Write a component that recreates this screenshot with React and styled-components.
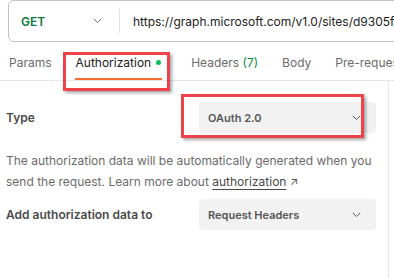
import styled, { createGlobalStyle } from "styled-components";

const GlobalStyle = createGlobalStyle`
  html, body {
    margin: 0;
    padding: 0;
    background: #ffffff;
  }
  body {
    font-family: Inter, "Noto Sans", sans-serif;
    -webkit-font-smoothing: antialiased;
  }
`;

const Chevron = ({ color = "#6b6b6b", size = 9 }) => (
  <svg width={size} height={size / 2 + 1} viewBox="0 0 10 6" fill="none">
    <polyline points="1,1 5,5 9,1" stroke={color} strokeWidth="1.1" />
  </svg>
);

const App = () => {
  return (
    <Page>
      <GlobalStyle />
      <UrlBar>
        <MethodSelect>
          <span>GET</span>
          <Chevron />
        </MethodSelect>
        <Divider />
        <UrlText>https://graph.microsoft.com/v1.0/sites/d9305f8a-0000-4bc1-a7c9</UrlText>
      </UrlBar>

      <Tabs>
        <Tab>Params</Tab>
        <Tab $active>
          Authorization
          <Dot />
        </Tab>
        <Tab>
          Headers&nbsp;<Count>(7)</Count>
        </Tab>
        <Tab>Body</Tab>
        <Tab>Pre-request Script</Tab>
      </Tabs>

      <Body>
        <Main>
          <Row $top={21}>
            <Label>Type</Label>
            <Select>
              <span>OAuth 2.0</span>
              <Chevron color="#555" />
            </Select>
          </Row>
          <Help>
            The authorization data will be automatically generated when you
            send the request. Learn more about <a>authorization</a> <Arrow>↗</Arrow>
          </Help>
          <Row $top={6}>
            <Label>Add authorization data to</Label>
            <Select>
              <span>Request Headers</span>
              <Chevron color="#555" />
            </Select>
          </Row>
        </Main>
        <Side />
      </Body>

      <Highlight $left={63} $top={52} $w={107} $h={39} />
      <Highlight $left={181} $top={94} $w={183} $h={44} />
    </Page>
  );
};

export default App;

const Page = styled.div`
  position: relative;
  width: 394px;
  height: 278px;
  overflow: hidden;
`;

const UrlBar = styled.div`
  margin-left: 8px;
  width: 440px;
  height: 42px;
  box-sizing: border-box;
  border: 1px solid #c2c2c2;
  border-radius: 6px;
  display: flex;
  align-items: center;
`;

const MethodSelect = styled.div`
  flex: 0 0 110px;
  box-sizing: border-box;
  padding: 0 17px 0 12px;
  display: flex;
  align-items: center;
  justify-content: space-between;
  font-size: 12px;
  font-weight: 600;
  color: #0b7a3b;
`;

const Divider = styled.div`
  flex: 0 0 1px;
  height: 24px;
  background: #e0e0e0;
`;

const UrlText = styled.div`
  min-width: 0;
  padding-left: 13px;
  font-size: 12px;
  color: #212121;
  white-space: nowrap;
`;

const Tabs = styled.div`
  display: flex;
  height: 38px;
  border-bottom: 1px solid #e6e6e6;
  padding-left: 9px;
  gap: 24px;
`;

const Tab = styled.div`
  position: relative;
  display: flex;
  align-items: center;
  padding-top: 3px;
  margin-right: ${(p) => (p.$active ? 6 : 0)}px;
  font-size: 12px;
  white-space: nowrap;
  color: ${(p) => (p.$active ? "#212121" : "#6b6b6b")};

  &::after {
    content: "";
    display: ${(p) => (p.$active ? "block" : "none")};
    position: absolute;
    left: -1px;
    right: -1px;
    bottom: 0;
    height: 2px;
    background: #ff6c37;
  }
`;

const Dot = styled.span`
  width: 5px;
  height: 5px;
  border-radius: 50%;
  background: #0cbb52;
  margin-left: 5px;
`;

const Count = styled.span`
  color: #0b8a3f;
`;

const Body = styled.div`
  display: flex;
`;

const Main = styled.div`
  width: 389px;
  height: 200px;
  box-sizing: border-box;
  border-right: 1px solid #e6e6e6;
  padding-left: 6px;
`;

const Side = styled.div`
  flex: 1;
`;

const Row = styled.div`
  display: flex;
  align-items: center;
  margin-top: ${(p) => p.$top}px;
`;

const Label = styled.div`
  width: 193px;
  font-size: 12px;
  font-weight: 600;
  color: #4a4a4a;
`;

const Select = styled.div`
  width: 177px;
  height: 31px;
  box-sizing: border-box;
  padding: 0 15px 0 9px;
  border-radius: 4px;
  background: #f2f2f2;
  display: flex;
  align-items: center;
  justify-content: space-between;
  font-size: 11px;
  font-weight: 600;
  color: #555555;
`;

const Help = styled.p`
  margin: 17px 0 0;
  font-size: 12px;
  line-height: 21px;
  color: #6b6b6b;

  a {
    color: #4a4a4a;
    text-decoration: underline;
    text-underline-offset: 3px;
  }
`;

const Arrow = styled.span`
  font-size: 11px;
  color: #555;
`;

const Highlight = styled.div`
  position: absolute;
  left: ${(p) => p.$left}px;
  top: ${(p) => p.$top}px;
  width: ${(p) => p.$w}px;
  height: ${(p) => p.$h}px;
  box-sizing: border-box;
  border: 3px solid #ef4349;
  box-shadow: 2px 2px 3px rgba(0, 0, 0, 0.35);
`;
